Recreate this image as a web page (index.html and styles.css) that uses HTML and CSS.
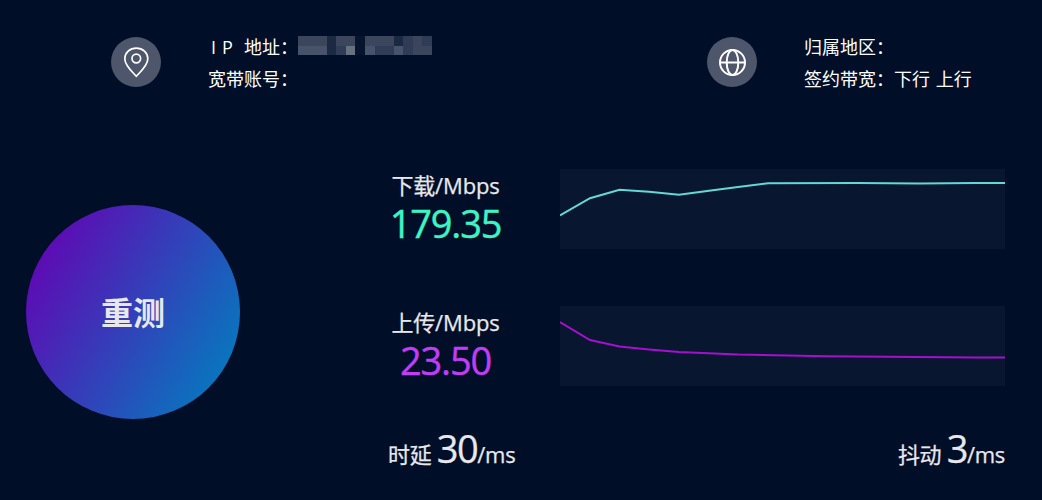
FILE: index.html
```html
<!DOCTYPE html>
<html lang="zh-CN">
<head>
    <meta charset="UTF-8">
    <meta name="viewport" content="width=device-width, initial-scale=1.0">
    <title>宽带测速</title>
    <link rel="stylesheet" href="styles.css">
</head>
<body>
    <div class="info">
        <div class="info-item">
            <div class="info-icon">
                <svg width="50" height="50" viewBox="0 0 50 50">
                    <path d="M25.3 39.3 C21.5 35 13.8 28.500 13.800 21.700 A11.500 10.600 0 0 1 36.800 21.700 C36.800 28.500 29.100 35 25.300 39.300 Z"/>
                    <circle cx="25.3" cy="21.500" r="4.300"/>
                </svg>
            </div>
            <div class="info-text">
                <p><span class="ip">IP</span>地址：<svg class="mosaic" width="134" height="19" viewBox="0 0 14 2" preserveAspectRatio="none" shape-rendering="crispEdges">
                    <rect class="m3" x="0" y="0" width="3" height="1"/>
                    <rect class="m1" x="3" y="0" width="1" height="1"/>
                    <rect class="m3" x="4" y="0" width="2" height="1"/>
                    <rect class="m0" x="6" y="0" width="1" height="2"/>
                    <rect class="m3" x="7" y="0" width="3" height="1"/>
                    <rect class="m1" x="10" y="0" width="1" height="1"/>
                    <rect class="m2" x="11" y="0" width="1" height="1"/>
                    <rect class="m3" x="12" y="0" width="1" height="1"/>
                    <rect class="m2" x="13" y="0" width="1" height="1"/>
                    <rect class="m4" x="0" y="1" width="3" height="1"/>
                    <rect class="m1" x="3" y="1" width="1" height="1"/>
                    <rect class="m2" x="4" y="1" width="1" height="1"/>
                    <rect class="m5" x="5" y="1" width="1" height="1"/>
                    <rect class="m4" x="7" y="1" width="1" height="1"/>
                    <rect class="m2" x="8" y="1" width="2" height="1"/>
                    <rect class="m4" x="10" y="1" width="1" height="1"/>
                    <rect class="m2" x="11" y="1" width="1" height="1"/>
                    <rect class="m3" x="12" y="1" width="2" height="1"/>
                </svg></p>
                <p>宽带账号：</p>
            </div>
        </div>
        <div class="info-item">
            <div class="info-icon">
                <svg class="globe" width="50" height="50" viewBox="0 0 50 50">
                    <circle cx="25.500" cy="25.500" r="12.500"/>
                    <ellipse cx="25.500" cy="25.500" rx="5.800" ry="12.500"/>
                    <path d="M13 25.500 H38"/>
                </svg>
            </div>
            <div class="info-text">
                <p>归属地区：</p>
                <p class="band">签约带宽：下行 上行</p>
            </div>
        </div>
    </div>

    <div class="main">
        <button class="retest">重测</button>
        <div class="result">
            <div class="row">
                <div class="speed">
                    <div class="label">下载/Mbps</div>
                    <div class="value download">179.35</div>
                </div>
                <svg class="chart" width="445" height="80" viewBox="0 0 445 80">
                    <polyline class="line-download" points="0,46.500 30,29.200 59.500,20.800 89,22.800 119,25.800 149,21.700 178,18 208,14.200 297,14.100 360,14.500 415,14.100 445,14.100"/>
                </svg>
            </div>
            <div class="row">
                <div class="speed">
                    <div class="label">上传/Mbps</div>
                    <div class="value upload">23.50</div>
                </div>
                <svg class="chart" width="445" height="80" viewBox="0 0 445 80">
                    <polyline class="line-upload" points="0,16 30,34 59.500,40.500 89,43.500 119,46 178,48.500 267,50.300 356,51 415,51.600 445,51.600"/>
                </svg>
            </div>
            <div class="delay">
                <div>时延 <span class="num">30</span>/ms</div>
                <div>抖动 <span class="num">3</span>/ms</div>
            </div>
        </div>
    </div>
</body>
</html>
```
FILE: styles.css
```css
* {
    box-sizing: border-box;
}
body {
    margin: 0;
    height: 500px;
    overflow: hidden;
    background-color: #000e28;
    color: #e8e8ec;
    font-family: "Open Sans", "Noto Sans CJK SC", sans-serif;
}
p {
    margin: 0;
}

/* account info */
.info {
    display: flex;
    justify-content: space-between;
    padding: 31px 69px 0 111px;
}
.info-item {
    display: flex;
}
.info-icon {
    width: 50px;
    height: 50px;
    margin: 6px 47px 0 0;
    border-radius: 50%;
    background-color: #4d566a;
}
.info-icon svg {
    display: block;
    fill: none;
    stroke: #fff;
    stroke-width: 1.7;
}
.info-icon .globe {
    stroke-width: 2;
}
.info-text {
    color: #fff;
    font-size: 18px;
    line-height: 32px;
    white-space: nowrap;
}
.info-text p {
    display: flex;
    align-items: center;
    height: 32px;
}
.band {
    width: 169px;
    word-spacing: 1px;
}
.ip {
    width: 36px;
    padding-left: 3px;
    letter-spacing: 6px;
}
.mosaic {
    margin-top: -3px;
}
.m0 { fill: #06142e; }
.m1 { fill: #1b2942; }
.m2 { fill: #303c55; }
.m3 { fill: #3b455c; }
.m4 { fill: #475368; }
.m5 { fill: #66727f; }

/* speed results */
.main {
    display: flex;
    padding: 74px 37px 0 26px;
}
.retest {
    width: 214px;
    height: 214px;
    margin-top: 36px;
    padding: 0 0 2px;
    border: none;
    border-radius: 50%;
    background: linear-gradient(120deg, #6600b3 5%, #0080bf 95%);
    color: #e8e8ec;
    font-family: inherit;
    font-size: 32px;
    font-weight: bold;
    cursor: pointer;
}
.result {
    width: 617px;
    margin-left: auto;
}
.row {
    display: flex;
    justify-content: space-between;
    height: 137px;
}
.speed {
    width: 115px;
    text-align: center;
}
.label {
    margin-top: 1px;
    font-size: 22px;
    line-height: 30px;
    letter-spacing: -0.15px;
    white-space: nowrap;
    -webkit-text-stroke: 0.25px;
}
.value {
    margin-top: 1px;
    font-size: 38px;
    line-height: 44px;
    letter-spacing: -1.2px;
    -webkit-text-stroke: 0.4px;
}
.download {
    color: #3cf5c5;
}
.upload {
    color: #c23cf5;
}
.chart {
    display: block;
    background-color: #08162f;
}
.chart polyline {
    fill: none;
    stroke-width: 2;
}
.line-download {
    stroke: #62d9d5;
}
.line-upload {
    stroke: #a410ce;
}
.delay {
    display: flex;
    justify-content: space-between;
    font-size: 22px;
    line-height: 50px;
    letter-spacing: -0.3px;
    margin-top: -20px;
    -webkit-text-stroke: 0.25px;
}
.num {
    font-size: 38px;
    letter-spacing: -1.5px;
}
```
